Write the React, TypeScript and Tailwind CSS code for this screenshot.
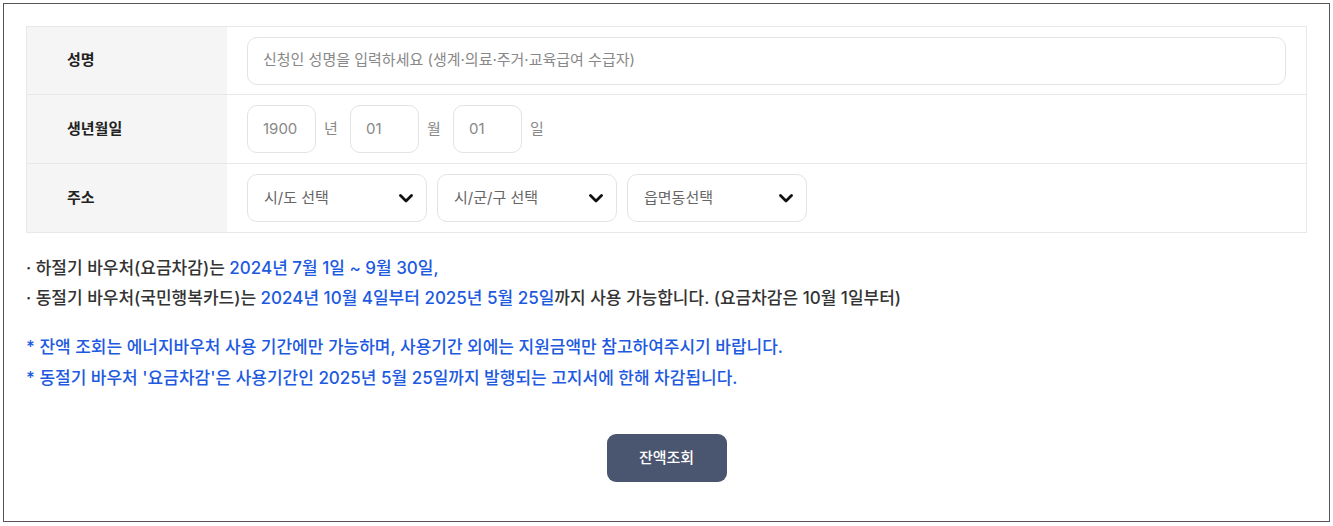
const font = { fontFamily: 'Inter, "Noto Sans CJK KR", "Noto Sans", sans-serif' };

function Row({ label, children, h }: { label: string; children: React.ReactNode; h: string }) {
  return (
    <div className={`flex ${h}`}>
      <div className="flex w-[200px] shrink-0 items-center bg-[#f5f5f5] pl-[40px] text-[15px] font-semibold text-[#222]">
        {label}
      </div>
      <div className="flex flex-1 items-center px-[20px]">{children}</div>
    </div>
  );
}

function Chevron() {
  return (
    <svg width="14" height="9" viewBox="0 0 14 9" fill="none">
      <path d="M1.5 1.5 L7 7 L12.5 1.5" stroke="#111" strokeWidth="2.8" strokeLinecap="round" strokeLinejoin="round" />
    </svg>
  );
}

function SelectBox({ label }: { label: string }) {
  return (
    <div className="flex h-[48px] w-[180px] items-center justify-between rounded-[10px] border border-[#e3e3e3] bg-white pl-[16px] pr-[13px]">
      <span className="text-[15px] text-[#666]">{label}</span>
      <Chevron />
    </div>
  );
}

function DateBox({ value }: { value: string }) {
  return (
    <div className="flex h-[48px] w-[69px] items-center rounded-[10px] border border-[#e3e3e3] bg-white pl-[15px] text-[15px] text-[#888]">
      {value}
    </div>
  );
}

export default function App() {
  return (
    <div className="p-[3px]" style={font}>
      <div className="h-[519px] border border-[#555] px-[22px] pt-[22px]">
        <div className="border border-[#e8e8e8]">
          <Row label="성명" h="h-[68px] border-b border-[#e8e8e8]">
            <div className="flex h-[48px] w-full items-center rounded-[10px] border border-[#e3e3e3] bg-white pl-[15px] text-[15px] text-[#888]">
              신청인 성명을 입력하세요 (생계·의료·주거·교육급여 수급자)
            </div>
          </Row>
          <Row label="생년월일" h="h-[69px] border-b border-[#e8e8e8]">
            <div className="flex items-center">
              <DateBox value="1900" />
              <span className="ml-[8px] mr-[12px] w-[14px] text-[15px] text-[#888]">년</span>
              <DateBox value="01" />
              <span className="ml-[8px] mr-[12px] w-[14px] text-[15px] text-[#888]">월</span>
              <DateBox value="01" />
              <span className="ml-[8px] text-[15px] text-[#888]">일</span>
            </div>
          </Row>
          <Row label="주소" h="h-[68px]">
            <div className="flex items-center gap-[10px]">
              <SelectBox label="시/도 선택" />
              <SelectBox label="시/군/구 선택" />
              <SelectBox label="읍면동선택" />
            </div>
          </Row>
        </div>

        <div className="mt-[20px] text-[17px] font-medium leading-[30px] text-[#333]">
          <p>
            · 하절기 바우처(요금차감)는 <span className="text-[#1d5ae0]">2024년 7월 1일 ~ 9월 30일,</span>
          </p>
          <p>
            · 동절기 바우처(국민행복카드)는 <span className="text-[#1d5ae0]">2024년 10월 4일부터 2025년 5월 25일</span>까지 사용 가능합니다. (요금차감은 10월 1일부터)
          </p>
        </div>

        <div className="mt-[19px] text-[17px] font-medium leading-[31px] text-[#1d5ae0]">
          <p>* 잔액 조회는 에너지바우처 사용 기간에만 가능하며, 사용기간 외에는 지원금액만 참고하여주시기 바랍니다.</p>
          <p>* 동절기 바우처 '요금차감'은 사용기간인 2025년 5월 25일까지 발행되는 고지서에 한해 차감됩니다.</p>
        </div>

        <div className="mt-[40px] flex justify-center">
          <button className="h-[48px] w-[120px] rounded-[9px] bg-[#4a5570] text-[15px] font-medium text-white">
            잔액조회
          </button>
        </div>
      </div>
    </div>
  );
}
